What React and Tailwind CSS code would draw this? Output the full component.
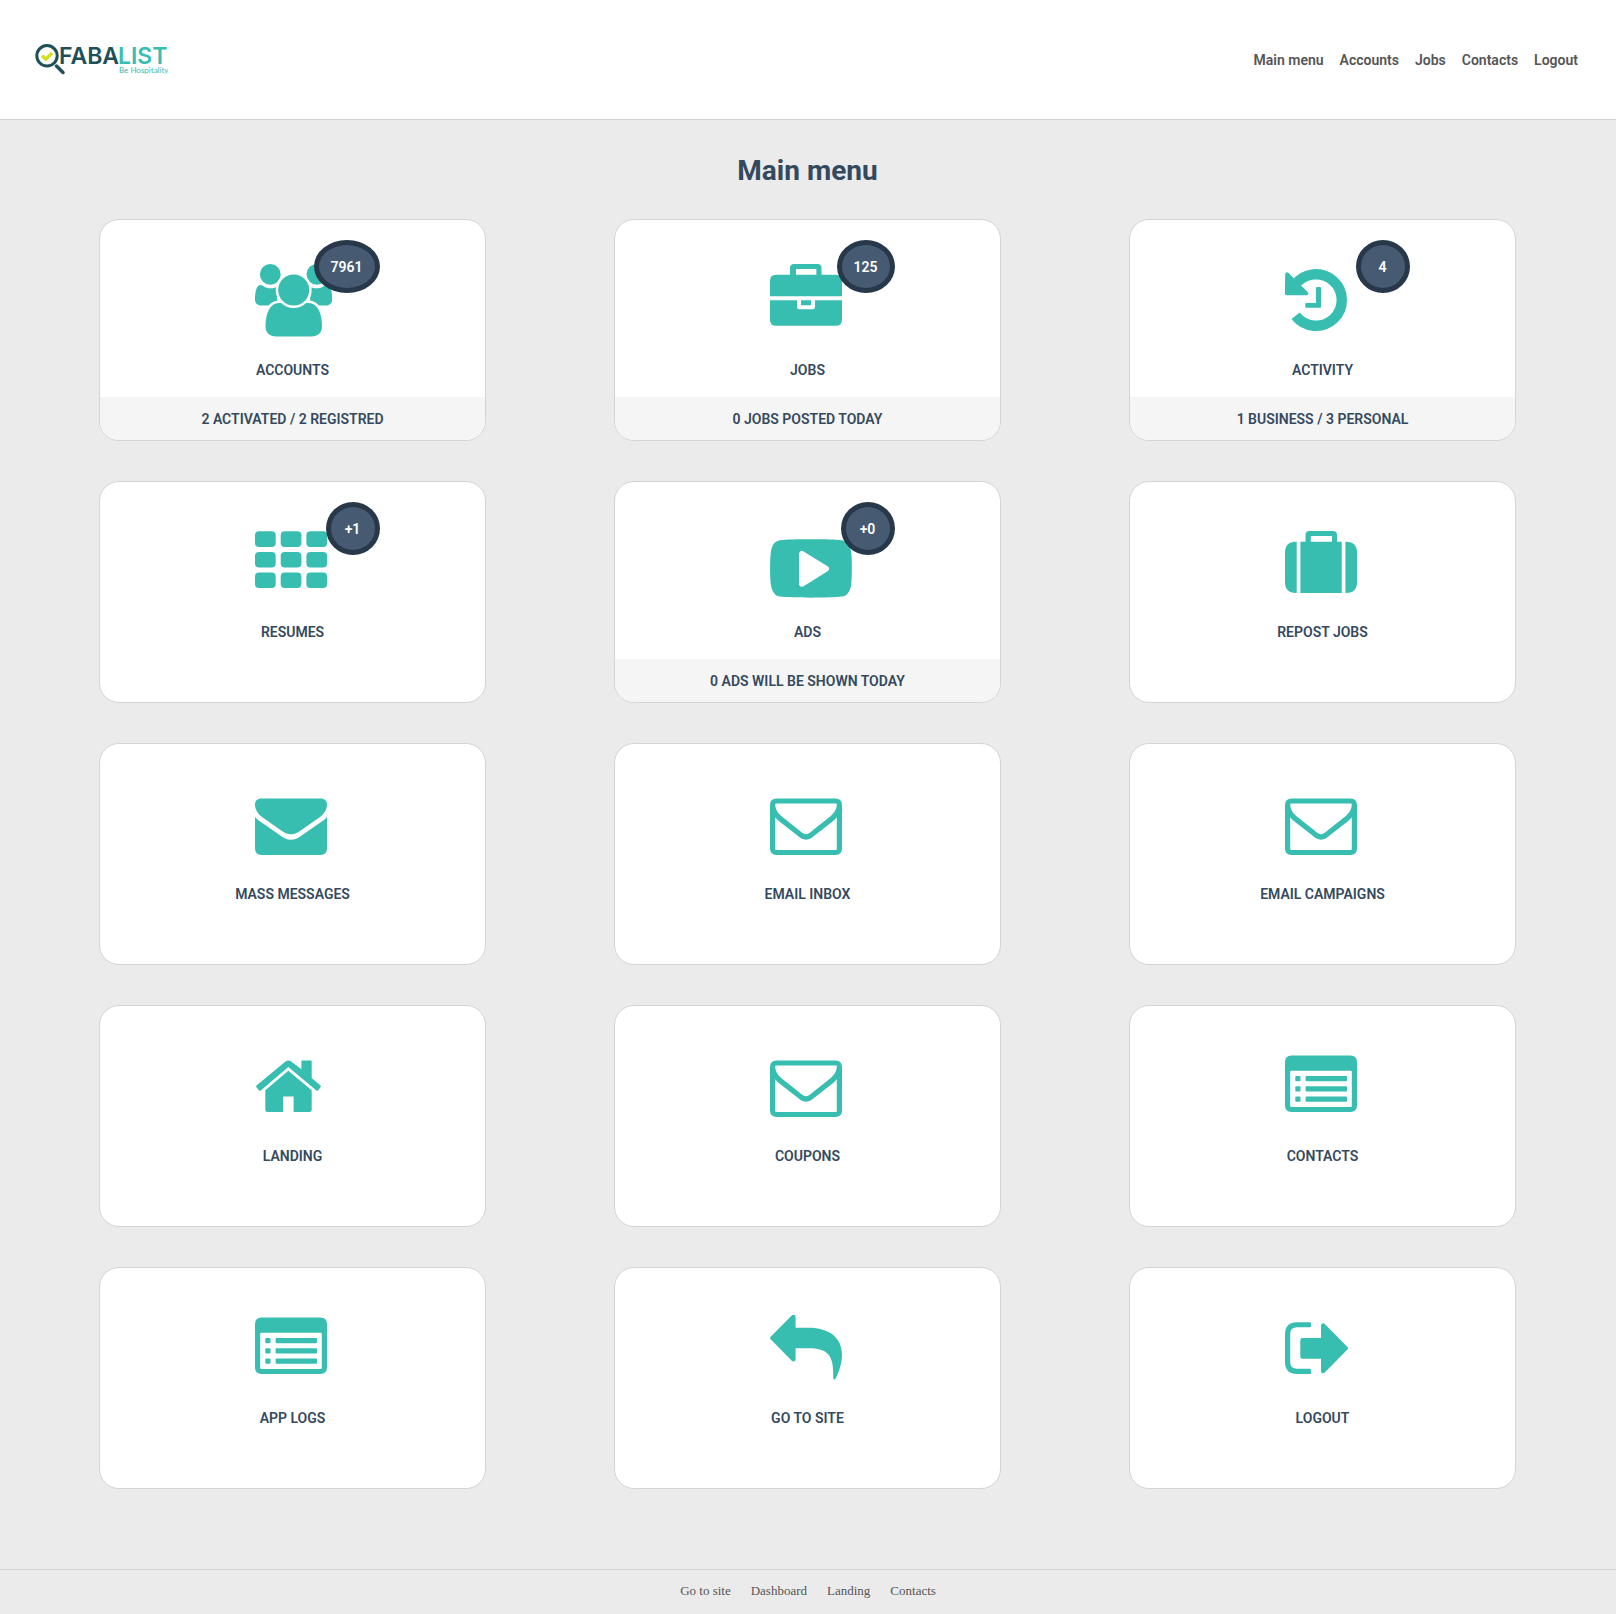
import React from "react";

const icons = {
  users: (
    <>
      <circle cx="15.3" cy="14.4" r="10.4" />
      <circle cx="61.9" cy="14.4" r="10.4" />
      <path d="M5.5 25C1.5 25 0 32 0 39.5C0 43 2.500 45.500 6 45.500H22V27C20 28 18 28.300 15.500 28.300C9.500 28.300 8 25 5.500 25Z" />
      <path d="M71.700 25C75.700 25 77.200 32 77.200 39.500C77.200 43 74.700 45.500 71.200 45.500H55.200V27C57.200 28 59.200 28.300 61.700 28.300C67.700 28.300 69.200 25 71.700 25Z" />
      <path
        d="M24 43C15 43 10.500 53 10.500 66.500C10.500 73 15 76.500 21 76.500H56.500C62.500 76.500 67 73 67 66.500C67 53 62.500 43 53.500 43Z"
        stroke="#fff"
        strokeWidth="5"
        paintOrder="stroke"
      />
      <circle cx="38.700" cy="30" r="18" fill="#fff" />
      <circle cx="38.700" cy="30" r="15.500" />
    </>
  ),
  briefcase: (
    <path
      fillRule="evenodd"
      d="M20 14.700V8Q20 4 24 4H47.500Q51.500 4 51.500 8V14.700H66Q72 14.700 72 20.700V36.300H0V20.700Q0 14.700 6 14.700ZM26 9V14.700H46.400V9ZM0 40.300H27V47Q27 49.300 29.300 49.300H42.700Q45 49.300 45 47V40.300H72V59.700Q72 65.700 66 65.700H6Q0 65.700 0 59.700ZM31 40.300H41V45.300H31Z"
    />
  ),
  history: (
    <>
      <path d="M10.600 55.800A25.800 25.800 0 1 0 10 25" fill="none" stroke="currentColor" strokeWidth="10.400" clipPath="url(#history-arc)" />
      <clipPath id="history-arc">
        <path d="M0 9L24 35L10 47L0 54V80H80V0H0Z" />
      </clipPath>
      <path d="M2 14L21.500 33.500H1.700Z" stroke="currentColor" strokeWidth="3.600" strokeLinejoin="round" />
      <path d="M32 27H35Q36 27 36 28V46.700Q36 47.700 35 47.700H21.300Q20.300 47.700 20.300 46.700V44Q20.300 43 21.300 43H31V28Q31 27 32 27Z" />
    </>
  ),
  grid: (
    <>
      {[9.2, 29.9, 50.4].map((y) =>
        [0, 25.7, 51.4].map((x) => <rect key={`${x}-${y}`} x={x} y={y} width="20.7" height="15.7" rx="4" />)
      )}
    </>
  ),
  video: (
    <>
      <path d="M41 17.300C55 17.300 65 17.500 72 18.300C77 19 80 23 81 29C82.200 36 82.200 56 81 63.500C80 69.500 77 74 72 74.600C60 76.100 22 76.100 10 74.600C5 74 2 69.500 1 63.500C-.2 56-.2 36 1 29C2 23 5 19 10 18.300C17 17.500 27 17.300 41 17.300Z" />
      <path d="M32 32V61.700L56 46.700Z" fill="#fff" stroke="#fff" strokeWidth="6" strokeLinejoin="round" />
    </>
  ),
  suitcase: (
    <path
      fillRule="evenodd"
      d="M11.700 19.700V71H11Q0 71 0 60V30.700Q0 19.700 11 19.700ZM15.400 19.700H20.500V13Q20.500 9 24.500 9H48Q52 9 52 13V19.700H56.700V71H15.400ZM25.800 14V19.700H47V14ZM60.400 19.700H61Q72 19.700 72 30.700V60Q72 71 61 71H60.400Z"
    />
  ),
  mail: (
    <>
      <path d="M6.500 14.500H65.500C69.500 14.500 72 16.800 72 20.500C72 25.500 69 30 65 33L46.500 46C42 49.200 39.500 50.200 36 50.200C32.500 50.200 30 49.200 25.500 46L7 33C3 30 0 25.500 0 20.500C0 16.800 2.500 14.500 6.500 14.500Z" />
      <path d="M0 33C1.300 34.500 3 36 4.500 37L25 51.200C29 54.200 32.500 55.700 36 55.700C39.500 55.700 43 54.200 47 51.200L67.500 37C69 36 70.700 34.500 72 33V64.500Q72 71 65.500 71H6.500Q0 71 0 64.500Z" />
    </>
  ),
  mailOpen: (
    <path
      fillRule="evenodd"
      d="M6.500 14.500H65.500Q72 14.500 72 21V64.500Q72 71 65.500 71H6.500Q0 71 0 64.500V21Q0 14.500 6.500 14.500ZM5.200 20.500C5.200 25 8 29.500 11.500 32.200L29.500 46.500C32.500 49 34 50.300 36 50.300C38 50.300 39.500 49 42.500 46.500L60.500 32.200C64 29.500 66.800 25 66.800 20.500Q66.800 19.600 66 19.600H6Q5.200 19.600 5.200 20.500ZM5.200 33.300V65Q5.200 66 6.200 66H65.800Q66.800 66 66.800 65V33.300Q65.500 35 63.500 36.700L46.500 50C42.500 53.500 39.500 55.700 36 55.700C32.500 55.700 29.500 53.500 25.500 50L8.500 36.700Q6.500 35 5.200 33.300Z"
    />
  ),
  home: (
    <>
      <path d="M33.300 24.700L56.700 44.200V64Q56.700 66 54.700 66H38.600V50.400H28.100V66H12.300Q10.300 66 10.300 64V44.200Z" />
      <path d="M30.500 15.400Q33.300 13.400 36.300 15.400L46.400 23.300V15.400Q46.400 14.400 47.400 14.400H55.700Q56.700 14.400 56.700 15.400V32L65.500 39.500Q66.300 40.200 65.600 41L63.200 44.300Q62.300 45.200 61.400 44.500L33.300 21L5.800 44.500Q4.800 45.200 3.900 44.300L1.300 41Q.7 40.200 1.500 39.400Z" />
    </>
  ),
  list: (
    <>
      <path
        fillRule="evenodd"
        d="M6.500 9.500H65.500Q72 9.500 72 16V59.500Q72 66 65.500 66H6.500Q0 66 0 59.500V16Q0 9.500 6.500 9.500ZM6.200 24.800Q5.200 24.800 5.200 25.800V60Q5.200 61 6.200 61H65.800Q66.800 61 66.800 60V25.800Q66.800 24.800 65.800 24.800Z"
      />
      {[30, 40.3, 50.6].map((y) => (
        <React.Fragment key={y}>
          <rect x="10.300" y={y} width="5.200" height="5.200" rx="1" />
          <rect x="20.600" y={y} width="41.400" height="5.200" rx="1" />
        </React.Fragment>
      ))}
    </>
  ),
  reply: (
    <path d="M.4 29Q-.3 30 .4 31L22 53Q25.600 54.600 25.600 51V40.300H38C58 40.300 64 47 63.200 70Q64.200 72.500 65.600 70.500C69 64 72 55 72 47C72 30 60 19.700 38 19.700H25.600V9.500Q25.600 5.800 22 7.300Z" />
  ),
  logout: (
    <>
      <path d="M24.700 14.300Q26 14.300 26 15.600V18Q26 19.300 24.700 19.300H12Q5.200 19.300 5.200 26V54Q5.200 60.700 12 60.700H24.700Q26 60.700 26 62V64.700Q26 66 24.700 66H12Q0 66 0 54V26.300Q0 14.300 12 14.300Z" />
      <path d="M36 30V18Q36 14.300 39.500 15.700L62.700 39.300Q63.400 40.300 62.700 41.300L39.500 64.700Q36 66.300 36 62.500V50.700H17.500Q15.300 50.700 15.300 48.500V32.200Q15.300 30 17.500 30Z" />
    </>
  ),
};

const cards = [
  { label: "Accounts", icon: "users", badge: "7961", note: "2 activated / 2 registred" },
  { label: "Jobs", icon: "briefcase", badge: "125", note: "0 jobs posted today" },
  { label: "Activity", icon: "history", badge: "4", note: "1 business / 3 personal" },
  { label: "Resumes", icon: "grid", badge: "+1" },
  { label: "Ads", icon: "video", badge: "+0", note: "0 ads will be shown today" },
  { label: "Repost jobs", icon: "suitcase" },
  { label: "Mass messages", icon: "mail" },
  { label: "Email inbox", icon: "mailOpen" },
  { label: "Email campaigns", icon: "mailOpen" },
  { label: "Landing", icon: "home" },
  { label: "Coupons", icon: "mailOpen" },
  { label: "Contacts", icon: "list" },
  { label: "App logs", icon: "list" },
  { label: "Go to site", icon: "reply" },
  { label: "Logout", icon: "logout" },
];

function Logo() {
  return (
    <a href="#" aria-label="Fabalist">
      <svg width="136" height="40" viewBox="0 0 136 40" aria-hidden="true">
        <circle cx="15" cy="15.800" r="10.200" fill="none" stroke="#1f4f59" strokeWidth="3" />
        <path d="M24.500 26L31 32.500" stroke="#1f4f59" strokeWidth="3.500" strokeLinecap="round" />
        <path d="M10 15.500L13.800 19.200L20 13" fill="none" stroke="#d3df1c" strokeWidth="3.200" />
        <text x="27" y="24" fontFamily="Inter, sans-serif" fontWeight="600" fontSize="23" fill="#1f4f59">
          FABA
        </text>
        <text x="86" y="24" fontFamily="Inter, sans-serif" fontWeight="600" fontSize="23" fill="#38bdb1">
          LIST
        </text>
        <text x="87" y="33" fontFamily="Lato, sans-serif" fontSize="8" fill="#38bdb1">
          Be Hospitality
        </text>
      </svg>
    </a>
  );
}

function Card({ label, icon, badge, note }) {
  return (
    <a
      href="#"
      className="mx-auto flex min-h-[222px] w-3/4 flex-col overflow-hidden rounded-[20px] border border-[#d4d4d4] bg-white text-center text-[14px] leading-5 font-semibold text-[#34495e] uppercase"
    >
      <div className="relative mx-auto w-[174px] pt-10">
        <svg className="mx-auto h-20 w-[76px] overflow-visible text-[#38bdb1]" viewBox="0 0 76 80" fill="currentColor" aria-hidden="true">
          {icons[icon]}
        </svg>
        {badge && (
          <span className="absolute top-5 right-0 flex h-[53px] min-w-[54px] items-center justify-center rounded-[50%] border-5 border-[#27384a] bg-[#465a72] px-3 text-white">
            {badge}
          </span>
        )}
      </div>
      <span className="mt-5">{label}</span>
      {note && <span className="mt-auto bg-[#f5f5f5] pt-3 pb-[11px]">{note}</span>}
    </a>
  );
}

export default function App() {
  return (
    <div className="flex min-h-screen flex-col bg-[#ebebeb] font-[Roboto,sans-serif]">
      <header className="flex min-h-[120px] items-center justify-between border-b border-[#d0d0d0] bg-white pr-[38px] pl-8">
        <Logo />
        <nav className="flex gap-4 text-[14px] leading-5 font-semibold text-[#555]">
          {["Main menu", "Accounts", "Jobs", "Contacts", "Logout"].map((item) => (
            <a key={item} href="#">
              {item}
            </a>
          ))}
        </nav>
      </header>
      <main className="grow pt-[33px] pr-9 pl-[35px]">
        <h1 className="text-center text-[28px] leading-9 font-bold text-[#34495e]">Main menu</h1>
        <div className="mt-[30px] grid grid-cols-3 gap-y-10">
          {cards.map((card) => (
            <Card key={card.label} {...card} />
          ))}
        </div>
      </main>
      <footer className="mt-20 flex h-[45px] items-center justify-center border-t border-[#cfcfcf] pb-0.5 font-['Liberation_Serif',serif] text-[13px] text-[#555]">
        <nav className="flex gap-5">
          {["Go to site", "Dashboard", "Landing", "Contacts"].map((item) => (
            <a key={item} href="#">
              {item}
            </a>
          ))}
        </nav>
      </footer>
    </div>
  );
}
